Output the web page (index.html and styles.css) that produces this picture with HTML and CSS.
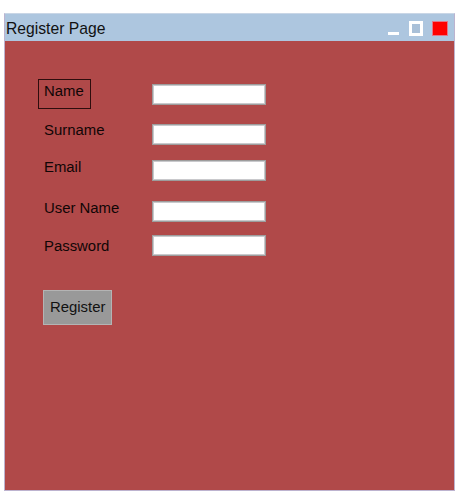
FILE: index.html
```html
<!DOCTYPE html>
<html lang="en">
<head>
<meta charset="utf-8">
<title>Register Page</title>
<link rel="stylesheet" href="styles.css">
</head>
<body>
<div class="window">
  <div class="titlebar">
    <span class="title">Register Page</span>
    <div class="controls">
      <span class="ctl ctl-min"></span>
      <span class="ctl ctl-max"></span>
      <span class="ctl ctl-close"></span>
    </div>
  </div>
  <form class="form">
    <div class="row row-name">
      <label class="field-label boxed">Name</label>
      <input class="field" type="text">
    </div>
    <div class="row row-surname">
      <label class="field-label">Surname</label>
      <input class="field" type="text">
    </div>
    <div class="row row-email">
      <label class="field-label">Email</label>
      <input class="field" type="text">
    </div>
    <div class="row row-user">
      <label class="field-label">User Name</label>
      <input class="field" type="text">
    </div>
    <div class="row row-pass">
      <label class="field-label">Password</label>
      <input class="field" type="password">
    </div>
    <button class="btn" type="button">Register</button>
  </form>
</div>
</body>
</html>
```
FILE: styles.css
```css
html, body {
  margin: 0;
  padding: 0;
  background: #ffffff;
}
body {
  padding: 13px 0 0 4px;
  font-family: "Liberation Sans", Arial, sans-serif;
}
.window {
  box-sizing: border-box;
  width: 451px;
  height: 478px;
  border: 1px solid #bdb3cf;
  border-top-color: #c9d6e6;
  background: #b04949;
  display: flex;
  flex-direction: column;
}
.titlebar {
  height: 27px;
  background: #adc6df;
  display: flex;
  justify-content: space-between;
  align-items: flex-start;
  padding: 0 6px 0 1px;
}
.title {
  font-size: 15.7px;
  line-height: 18px;
  padding-top: 6px;
  color: #111111;
}
.controls {
  display: flex;
  align-items: flex-end;
  margin-top: 7px;
  height: 15px;
}
.ctl {
  display: block;
  box-sizing: border-box;
}
.ctl-min {
  width: 11px;
  height: 3px;
  background: #ffffff;
  margin-bottom: 1px;
  margin-right: 10px;
}
.ctl-max {
  width: 14px;
  height: 15px;
  border: 3px solid #ffffff;
  background: #a9c0d8;
  margin-right: 9px;
}
.ctl-close {
  width: 16px;
  height: 15px;
  background: #ff0000;
  border: 1px solid #e2788a;
}
.form {
  margin: 0;
  padding: 38px 0 0 33px;
  display: flex;
  flex-direction: column;
  align-items: flex-start;
}
.row {
  display: grid;
  grid-template-columns: 114px 114px;
  align-items: start;
}
.field-label {
  justify-self: start;
  font-size: 14.9px;
  line-height: 17px;
  color: #100606;
  border: 1px solid transparent;
  padding: 3px 5px;
}
.field-label.boxed {
  border-color: #2e0d0d;
  padding: 3px 6px 8px 5px;
}
.field {
  box-sizing: border-box;
  width: 114px;
  height: 21px;
  margin: 0;
  padding: 0 3px;
  background: #ffffff;
  border: 1px solid #9d9d9d;
  box-shadow: inset 0 0 0 1px #c9c9cc;
  font-family: inherit;
  font-size: 13px;
}
.row-name .field { margin-top: 5px; }
.row-surname { margin-top: 9px; }
.row-surname .field { margin-top: 6px; }
.row-email { margin-top: 10px; }
.row-email .field { margin-top: 5px; }
.row-user { margin-top: 15px; }
.row-user .field { margin-top: 5px; }
.row-pass { margin-top: 12px; }
.row-pass .field { margin-top: 1px; }
.btn {
  margin: 31px 0 0 5px;
  box-sizing: border-box;
  height: 35px;
  padding: 0 6px;
  background: #999999;
  border: 1px solid #b4b4b4;
  font-family: inherit;
  font-size: 14.9px;
  line-height: 17px;
  color: #111111;
}
```
